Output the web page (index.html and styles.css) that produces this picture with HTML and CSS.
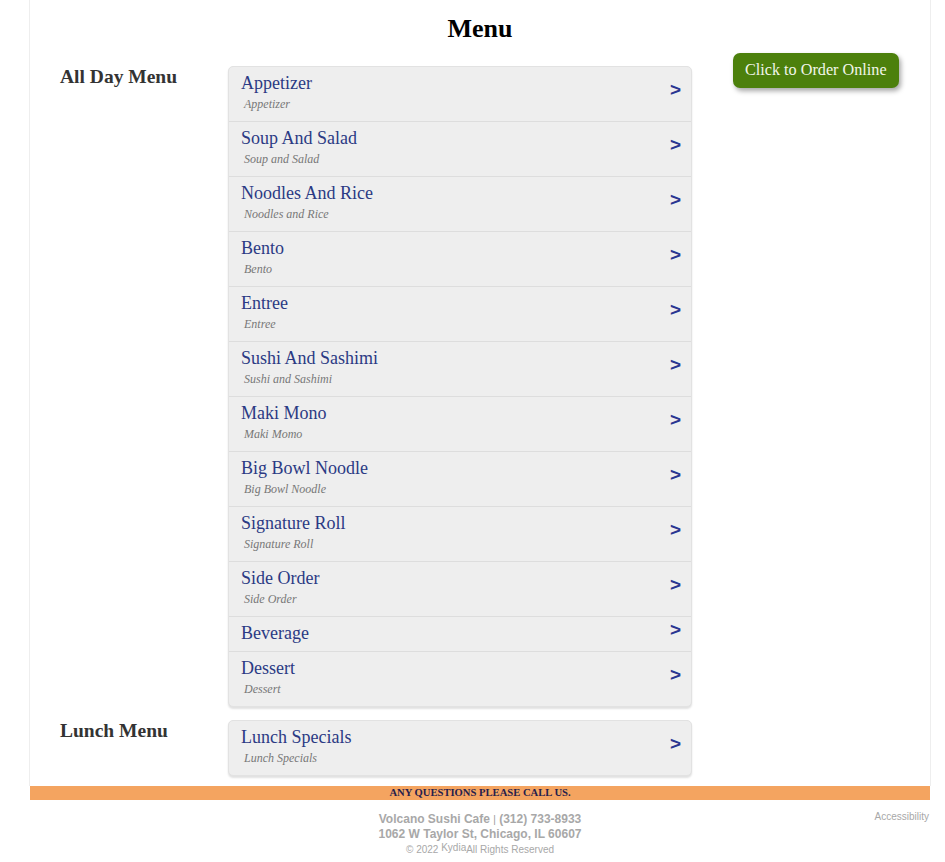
FILE: index.html
```html
<!DOCTYPE html>
<html lang="en">
<head>
<meta charset="utf-8">
<title>Menu - Volcano Sushi Cafe</title>
<link rel="stylesheet" href="styles.css">
</head>
<body>
<div class="page">
  <div class="container">
    <header class="header"><h1 class="title">Menu</h1></header>
    <div class="main">
      <div class="sections">
        <section class="section">
          <h2 class="label">All Day Menu</h2>
          <ul class="list">
            <li class="row"><div class="text"><div class="name">Appetizer</div><div class="desc">Appetizer</div></div><span class="chev">&gt;</span></li>
            <li class="row"><div class="text"><div class="name">Soup And Salad</div><div class="desc">Soup and Salad</div></div><span class="chev">&gt;</span></li>
            <li class="row"><div class="text"><div class="name">Noodles And Rice</div><div class="desc">Noodles and Rice</div></div><span class="chev">&gt;</span></li>
            <li class="row"><div class="text"><div class="name">Bento</div><div class="desc">Bento</div></div><span class="chev">&gt;</span></li>
            <li class="row"><div class="text"><div class="name">Entree</div><div class="desc">Entree</div></div><span class="chev">&gt;</span></li>
            <li class="row"><div class="text"><div class="name">Sushi And Sashimi</div><div class="desc">Sushi and Sashimi</div></div><span class="chev">&gt;</span></li>
            <li class="row"><div class="text"><div class="name">Maki Mono</div><div class="desc">Maki Momo</div></div><span class="chev">&gt;</span></li>
            <li class="row"><div class="text"><div class="name">Big Bowl Noodle</div><div class="desc">Big Bowl Noodle</div></div><span class="chev">&gt;</span></li>
            <li class="row"><div class="text"><div class="name">Signature Roll</div><div class="desc">Signature Roll</div></div><span class="chev">&gt;</span></li>
            <li class="row"><div class="text"><div class="name">Side Order</div><div class="desc">Side Order</div></div><span class="chev">&gt;</span></li>
            <li class="row"><div class="text"><div class="name">Beverage</div></div><span class="chev">&gt;</span></li>
            <li class="row"><div class="text"><div class="name">Dessert</div><div class="desc">Dessert</div></div><span class="chev">&gt;</span></li>
          </ul>
        </section>
        <section class="section">
          <h2 class="label">Lunch Menu</h2>
          <ul class="list">
            <li class="row"><div class="text"><div class="name">Lunch Specials</div><div class="desc">Lunch Specials</div></div><span class="chev">&gt;</span></li>
          </ul>
        </section>
      </div>
      <aside class="aside">
        <a class="order-btn" href="#">Click to Order Online</a>
      </aside>
    </div>
  </div>
  <div class="notice">ANY QUESTIONS PLEASE CALL US.</div>
  <footer class="footer">
    <div class="footer-center">
      <div class="f-line"><b>Volcano Sushi Cafe</b> <span class="sep">|</span> <b>(312) 733-8933</b></div>
      <div class="f-line"><b>1062 W Taylor St, Chicago, IL 60607</b></div>
      <div class="f-copy">© 2022 <sup class="kydia">Kydia</sup>All Rights Reserved</div>
    </div>
    <a class="access" href="#">Accessibility</a>
  </footer>
</div>
</body>
</html>
```

FILE: styles.css
```css
html, body {
  margin: 0;
  padding: 0;
  background: #fff;
}

.page {
  margin-left: 29px;
  width: 902px;
  font-family: "Liberation Serif", "Times New Roman", serif;
}

.container {
  border-left: 1px solid #eeeeee;
  border-right: 1px solid #eeeeee;
  padding-bottom: 10px;
}

.header {
  height: 53px;
  display: flex;
  justify-content: center;
}

.title {
  margin: 14px 0 0;
  font-size: 26px;
  line-height: 30px;
  font-weight: bold;
  color: #000;
}

.main {
  display: flex;
}

.sections {
  display: flex;
  flex-direction: column;
  gap: 13px;
  padding-top: 13px;
}

.section {
  display: flex;
}

.label {
  width: 168px;
  padding-left: 30px;
  margin: 0;
  font-size: 19.5px;
  line-height: 22px;
  font-weight: bold;
  color: #333;
}

.list {
  list-style: none;
  margin: 0;
  padding: 0;
  width: 462px;
  background: #eeeeee;
  border: 1px solid #e2e2e2;
  border-radius: 5px;
  box-shadow: 0 2px 2px rgba(0, 0, 0, 0.12);
}

.row {
  display: flex;
  align-items: center;
  justify-content: space-between;
  padding: 5px 10px 7px 12px;
  border-top: 1px solid #dddddd;
}

.row:first-child {
  border-top: none;
}

.name {
  font-size: 18px;
  line-height: 22px;
  color: #2b3a84;
}

.desc {
  margin-left: 3px;
  font-size: 12px;
  line-height: 20px;
  font-style: italic;
  color: #777;
}

.chev {
  font-family: "Liberation Sans", Arial, sans-serif;
  font-weight: bold;
  font-size: 19px;
  line-height: 12px;
  color: #2a3591;
  margin-bottom: 6px;
}

.aside {
  flex: 1;
  padding-left: 41px;
}

.order-btn {
  display: inline-block;
  padding: 0 12px;
  height: 35px;
  line-height: 35px;
  font-size: 16.2px;
  color: #f2f6ea;
  text-decoration: none;
  background: #4c800c;
  border-radius: 7px;
  box-shadow: 2px 3px 5px rgba(0, 0, 0, 0.35);
}

.notice {
  margin: 0 1px;
  height: 14px;
  line-height: 14px;
  background: #f4a460;
  text-align: center;
  font-size: 10.6px;
  font-weight: bold;
  color: #26204d;
}

.footer {
  position: relative;
  padding-top: 12px;
  font-family: "Liberation Sans", Arial, sans-serif;
  color: #a8a8a8;
}

.footer-center {
  text-align: center;
}

.f-line {
  font-size: 12px;
  line-height: 14px;
}

.sep {
  font-size: 10px;
  font-weight: normal;
  color: #999;
}

.f-copy {
  margin-top: 0;
  font-size: 10px;
  line-height: 14px;
}

.kydia {
  font-size: 10px;
  vertical-align: 2px;
}

.access {
  position: absolute;
  right: 2px;
  top: 11px;
  font-size: 10px;
  color: #a8a8a8;
  text-decoration: none;
}
```
